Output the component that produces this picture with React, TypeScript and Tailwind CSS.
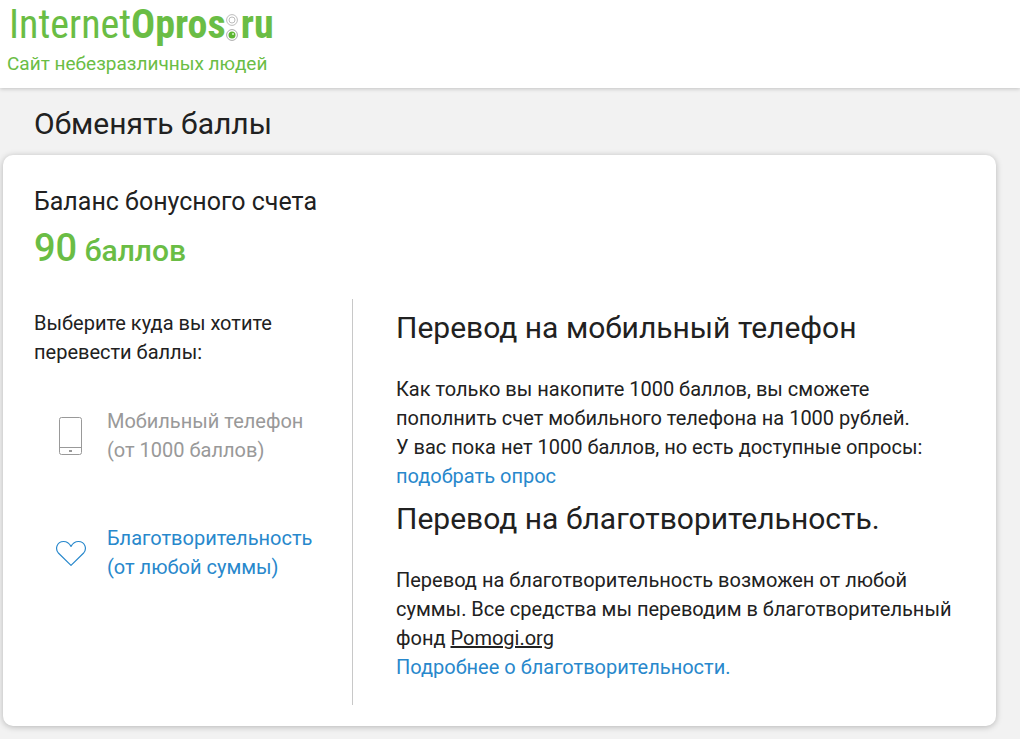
function Logo() {
	return (
		<a
			href="#"
			className="flex w-fit items-baseline pl-[2px] font-['Roboto_Condensed','Liberation_Sans_Narrow',sans-serif] text-[40px] leading-[50px] text-[#6abd45]"
		>
			<span>Internet</span>
			<span className="font-bold">Opros</span>
			<svg
				className="mr-[3px] mb-2 h-[28px] w-[12px] self-end"
				viewBox="0 0 12 28"
				fill="none"
				aria-hidden="true"
			>
				<circle cx="6" cy="6" r="5.400" stroke="#bdbdbd" />
				<circle cx="6" cy="6" r="3" stroke="#bdbdbd" />
				<circle cx="6" cy="21" r="5.400" stroke="#a9a9a9" />
				<circle cx="6" cy="21" r="3.500" fill="#5cb531" />
				<circle cx="7" cy="20" r="1" fill="#d8f0cc" />
			</svg>
			<span className="font-bold">ru</span>
		</a>
	);
}

function PhoneIcon() {
	return (
		<svg
			className="h-[40px] w-[32px] shrink-0"
			viewBox="0 0 32 40"
			fill="none"
			stroke="#999999"
			aria-hidden="true"
		>
			<rect x="4.5" y="1.5" width="22" height="37" rx="2" />
			<path d="M4.5 31.5h22" />
			<rect x="14" y="34" width="3" height="2" fill="#999999" stroke="none" />
		</svg>
	);
}

function HeartIcon() {
	return (
		<svg
			className="h-[40px] w-[32px] shrink-0"
			viewBox="0 0 32 40"
			fill="none"
			stroke="#2888cc"
			strokeWidth="1.2"
			strokeLinejoin="round"
			aria-hidden="true"
		>
			<path d="M16 32.4 3.6 20.3C-.3 16.2 1.7 8.5 8.6 8.5c3.3 0 5.8 2 7.4 4.900 1.600-2.900 4.100-4.900 7.400-4.900 6.900 0 8.900 7.700 5 11.800Z" />
		</svg>
	);
}

export default function App() {
	return (
		<div className="min-h-screen bg-[#f2f2f2] pb-3 font-[Roboto,sans-serif] text-[20px] leading-[29px] text-[#212121]">
			<header className="bg-white px-[7px] pb-[11px] shadow-[0_1px_4px_rgba(0,0,0,0.2)]">
				<Logo />
				<p className="text-[19px] leading-[27px] text-[#6abd45]">
					Сайт небезразличных людей
				</p>
			</header>

			<main className="pr-6 pl-[3px]">
				<h1 className="px-[31px] pt-[18px] pb-[14px] text-[30px] leading-[35px]">
					Обменять баллы
				</h1>

				<div className="rounded-[10px] bg-white px-[31px] pt-8 pb-[21px] shadow-[0_1px_6px_rgba(0,0,0,0.25)]">
					{/* Balance */}
					<h2 className="text-[25px]">Баланс бонусного счета</h2>
					<p className="mt-3 text-[30px] leading-[40px] font-medium text-[#6abd45]">
						<span className="text-[38px]">90</span> баллов
					</p>

					<div className="mt-7 flex">
						{/* Where to transfer */}
						<div className="w-[319px] shrink-0 border-r border-[#c8c8c8] pt-[10px]">
							<p>
								Выберите куда вы хотите
								<br />
								перевести баллы:
							</p>
							<ul className="mt-10 flex flex-col gap-[59px] pl-[21px]">
								<li className="flex items-center gap-5 text-[#999999]">
									<PhoneIcon />
									<span>
										Мобильный телефон
										<br />
										(от 1000 баллов)
									</span>
								</li>
								<li>
									<a
										href="#charity"
										className="flex items-center gap-5 text-[#2888cc]"
									>
										<HeartIcon />
										<span>
											Благотворительность
											<br />
											(от любой суммы)
										</span>
									</a>
								</li>
							</ul>
						</div>

						{/* Details */}
						<div className="min-w-0 flex-1 pb-[23px] pl-[43px]">
							<h2 className="mt-[11px] text-[30px] leading-[35px]">
								Перевод на мобильный телефон
							</h2>
							<p className="mt-[30px]">
								Как только вы накопите 1000 баллов, вы сможете
								<br />
								пополнить счет мобильного телефона на 1000 рублей.
								<br />
								У вас пока нет 1000 баллов, но есть доступные опросы:
								<br />
								<a href="#polls" className="text-[#2888cc]">
									подобрать опрос
								</a>
							</p>

							<h2 id="charity" className="mt-[10px] text-[30px] leading-[35px]">
								Перевод на благотворительность.
							</h2>
							<p className="mt-[30px]">
								Перевод на благотворительность возможен от любой
								<br />
								суммы. Все средства мы переводим в благотворительный
								<br />
								фонд{" "}
								<a href="#pomogi" className="underline">
									Pomogi.org
								</a>
								<br />
								<a href="#more" className="text-[#2888cc]">
									Подробнее о благотворительности.
								</a>
							</p>
						</div>
					</div>
				</div>
			</main>
		</div>
	);
}
